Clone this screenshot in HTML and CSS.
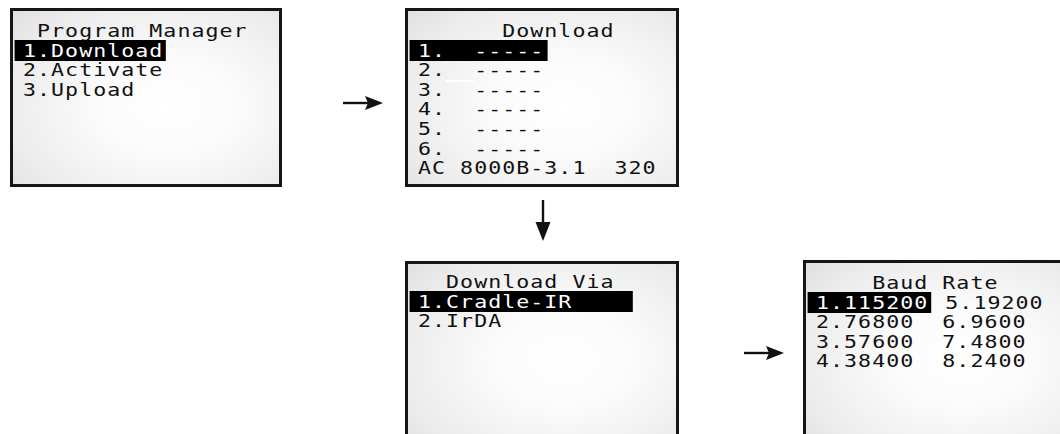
FILE: index.html
```html
<!DOCTYPE html>
<html lang="en">
  <head>
    <meta charset="utf-8">
    <title>Program Manager - Download</title>
    <link rel="stylesheet" href="styles.css">
  </head>
  <body>
    <div class="flow">

      <!-- program manager -->
      <div class="screen">
        <div class="text">
<div class="line"> Program Manager</div>
<div class="line"><span class="hl">1.Download</span></div>
<div class="line">2.Activate</div>
<div class="line">3.Upload</div>
        </div>
      </div>

      <div class="arrow right first">
        <svg width="40" height="16" viewBox="0 0 40 16">
          <line x1="0" y1="8" x2="28" y2="8" stroke="#111" stroke-width="2.4"/>
          <polygon points="22,1 40,8 22,15 25,8" fill="#111"/>
        </svg>
      </div>

      <!-- download list -->
      <div class="screen">
        <div class="text">
<div class="line">      Download</div>
<div class="line"><span class="hl">1.  -----</span></div>
<div class="line">2.<span class="ghost">  </span>-----</div>
<div class="line">3.  -----</div>
<div class="line">4.  -----</div>
<div class="line">5.  -----</div>
<div class="line">6.  -----</div>
<div class="line">AC 8000B-3.1  320</div>
        </div>
      </div>

      <div class="arrow down">
        <svg width="16" height="42" viewBox="0 0 16 42">
          <line x1="8" y1="0" x2="8" y2="28" stroke="#111" stroke-width="2.4"/>
          <polygon points="0.5,22 15.5,22 8,41" fill="#111"/>
        </svg>
      </div>

      <!-- download via -->
      <div class="screen via">
        <div class="text">
<div class="line">  Download Via</div>
<div class="line"><span class="hl wide">1.Cradle-IR</span></div>
<div class="line">2.IrDA</div>
        </div>
      </div>

      <div class="arrow right second">
        <svg width="40" height="16" viewBox="0 0 40 16">
          <line x1="0" y1="8" x2="28" y2="8" stroke="#111" stroke-width="2.4"/>
          <polygon points="22,1 40,8 22,15 25,8" fill="#111"/>
        </svg>
      </div>

      <!-- baud rate -->
      <div class="screen baud">
        <div class="text">
<div class="line">    Baud Rate</div>
<div class="line"><span class="hl">1.115200</span> 5.19200</div>
<div class="line">2.76800  6.9600</div>
<div class="line">3.57600  7.4800</div>
<div class="line">4.38400  8.2400</div>
        </div>
      </div>

    </div>
  </body>
</html>
```

FILE: styles.css
```css
html, body {
    margin: 0;
    background: #ffffff;
    overflow: hidden;
}

body {
    width: 1060px;
    height: 434px;
}

.flow {
    display: grid;
    grid-template-columns: 272px 123px 274px 124px 274px;
    grid-template-rows: 179px 74px 179px;
    padding-top: 8px;
    padding-left: 10px;
}

.screen {
    box-sizing: border-box;
    border: 3px solid #161616;
    padding: 10px 0 0 10px;
    background: radial-gradient(ellipse 75% 80% at 58% 55%, #ffffff 0%, #fbfbfb 35%, #ececec 80%, #e2e2e2 100%);
    overflow: hidden;
}

/* the lcd font is wider than any mono we have, so stretch it */
.text {
    font-family: "DejaVu Sans Mono", monospace;
    font-size: 18px;
    letter-spacing: 0.86px;
    line-height: 19.6px;
    color: #111111;
    transform: scaleX(1.2);
    transform-origin: 0 0;
}

.line {
    white-space: pre;
    height: 19.6px;
}

.hl {
    background: #000000;
    color: #ffffff;
    padding-left: 7.5px;
    margin-left: -7.5px;
    padding-right: 2.5px;
}

.hl.wide {
    padding-right: 50px;
}

.ghost {
    border-bottom: 2px solid #ffffff;
}

.via {
    grid-column: 3;
    grid-row: 3;
    padding-top: 8px;
}

.baud {
    grid-column: 5;
    grid-row: 3;
    margin-top: -1px;
}

.arrow {
    display: flex;
}

.arrow.right {
    align-items: flex-start;
}

.arrow.first {
    padding-top: 87px;
    padding-left: 61px;
}

.arrow.second {
    grid-column: 4;
    grid-row: 3;
    padding-top: 84px;
    padding-left: 65px;
}

.arrow.down {
    grid-column: 3;
    grid-row: 2;
    padding-top: 13px;
    padding-left: 130px;
}
```
